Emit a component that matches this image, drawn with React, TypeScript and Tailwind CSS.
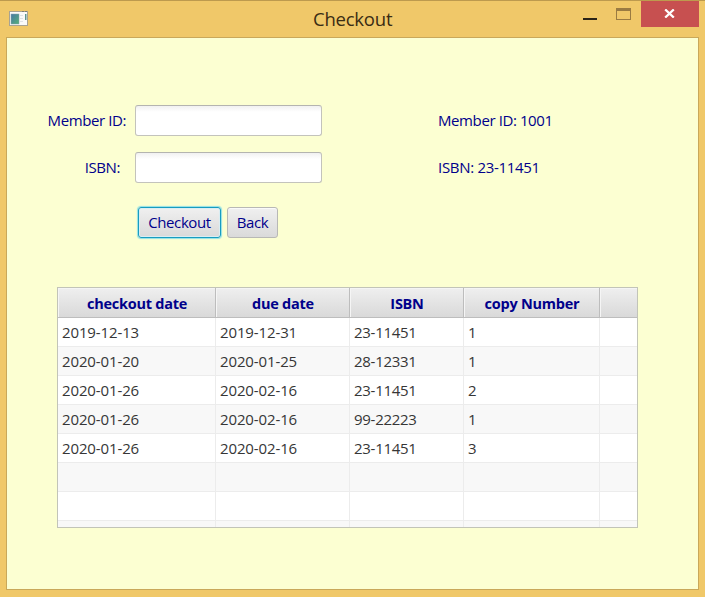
const columns = [
  { title: "checkout date", width: "w-[158px]", tracking: "tracking-[-0.12px]" },
  { title: "due date", width: "w-[134px]", tracking: "tracking-[-0.12px]" },
  { title: "ISBN", width: "w-[114px]", tracking: "tracking-[-0.28px]" },
  { title: "copy Number", width: "w-[136px]", tracking: "tracking-normal" },
];

const rows = [
  ["2019-12-13", "2019-12-31", "23-11451", "1"],
  ["2020-01-20", "2020-01-25", "28-12331", "1"],
  ["2020-01-26", "2020-02-16", "23-11451", "2"],
  ["2020-01-26", "2020-02-16", "99-22223", "1"],
  ["2020-01-26", "2020-02-16", "23-11451", "3"],
  ["", "", "", ""],
  ["", "", "", ""],
  ["", "", "", ""],
];

function AppIcon() {
  return (
    <svg className="ml-[9px] mt-[10px] h-[15px] w-[19px]" viewBox="0 0 19 15">
      <defs>
        <linearGradient id="pane" x1="0" y1="0" x2="1" y2="1">
          <stop offset="0" stopColor="#4778a6" />
          <stop offset="1" stopColor="#55b077" />
        </linearGradient>
      </defs>
      <rect x="0.5" y="0.5" width="18" height="14" fill="#fafafa" stroke="#a8a392" />
      <rect x="2" y="3" width="8" height="10" fill="url(#pane)" stroke="#8ba3ab" strokeWidth="0.5" />
      <path d="M11 4.5h3M11 7.5h3M11 10.5h3" stroke="#dfe2e6" />
      <rect x="16" y="3" width="1.5" height="6" fill="#5f9590" />
      <path d="M13 0.5h2M16 0.5h2" stroke="#7d7d78" />
    </svg>
  );
}

function TitleBar() {
  return (
    <header className="flex h-[36px] items-start">
      <AppIcon />
      <h1 className="ml-[285px] mt-[5px] w-[80px] whitespace-nowrap text-[18.5px] leading-[26px] tracking-[-0.22px] text-[#3a2c14]">
        Checkout
      </h1>
      <svg className="ml-[190px] mt-[16px] h-[3px] w-[14px] shrink-0" viewBox="0 0 14 3">
        <rect y="1" width="14" height="2" fill="#2b2418" />
      </svg>
      <svg className="ml-[19px] mt-[7px] h-[12px] w-[15px] shrink-0" viewBox="0 0 15 12">
        <rect x="0.5" y="0.5" width="14" height="11" fill="none" stroke="#9a7b42" />
        <rect width="15" height="3" fill="#9a7b42" />
      </svg>
      <button className="ml-[10px] flex h-[26px] w-[58px] shrink-0 items-center justify-center bg-[#c75050] pr-[2px]">
        <svg className="mt-[-1px] h-[9px] w-[11px]" viewBox="0 0 11 9">
          <path d="M1.2 0.4L9.8 8.6M9.8 0.4L1.2 8.6" stroke="#fff" strokeWidth="2.2" />
        </svg>
      </button>
    </header>
  );
}

function Field({ label, pad }: { label: string; pad: string }) {
  return (
    <div className="flex h-[31px] items-center">
      <label className={`w-[128px] whitespace-nowrap pb-[2px] text-right ${pad}`}>{label}</label>
      <input className="h-[31px] w-[187px] rounded-[3px] border border-[#c3c3bc] border-t-[#b4b4b0] bg-white bg-linear-to-b from-[#f1f1f1] to-white to-[6px] outline-none" />
    </div>
  );
}

export default function App() {
  return (
    <div
      className="h-[597px] w-[705px] overflow-hidden border-t border-[#bd9a4e] bg-[#f0c869] text-[15px] leading-5 text-[#00008b]"
      style={{ fontFamily: '"Open Sans", "Noto Sans", sans-serif' }}
    >
      <TitleBar />
      <main className="ml-[6px] h-[553px] w-[693px] border border-[#c9a85a] bg-[#fcffd2] tracking-[-0.4px]">
        <div className="flex pt-[67px]">
          <div className="flex w-[315px] flex-col gap-4">
            <Field label="Member ID:" pad="pr-[9px]" />
            <Field label="ISBN:" pad="pr-[15px]" />
          </div>
          <div className="ml-[116px] flex flex-col gap-4">
            <p className="flex h-[31px] items-center pb-[2px]">Member ID: 1001</p>
            <p className="flex h-[31px] items-center pb-[2px] tracking-[-0.3px]">ISBN: 23-11451</p>
          </div>
        </div>
        <div className="ml-[131px] mt-[24px] flex gap-[6px]">
          <button className="h-[31px] w-[83px] rounded-[3px] border border-[#179cc0] bg-linear-to-b from-[#f0f0f0] to-[#d9d9d9] pb-[2px] shadow-[0_0_1px_1px_#8fe0e6,inset_0_0_0_1px_#d9edf2]">
            Checkout
          </button>
          <button className="h-[31px] w-[51px] rounded-[3px] border border-[#b8b8b5] bg-linear-to-b from-[#f0f0f0] to-[#dadada] pb-[2px] shadow-[inset_0_1px_0_#fafafa]">
            Back
          </button>
        </div>
        <section className="ml-[50px] mt-[49px] h-[241px] w-[581px] overflow-hidden border border-[#c2c4b8] bg-white">
          <div className="flex h-[30px] border-b border-[#bdbdbd] bg-linear-to-b from-[#efefef] to-[#d9d9d9] text-[14.5px] font-bold tracking-[-0.25px]">
            {columns.map((column) => (
              <div
                key={column.title}
                className={`flex shrink-0 items-center justify-center border-r border-[#bdbdbd] pl-px pt-[2px] shadow-[inset_1px_1px_0_#f5f5f5] ${column.width}`}
              >
                {column.title}
              </div>
            ))}
            <div className="flex-1 shadow-[inset_1px_1px_0_#f5f5f5]" />
          </div>
          {rows.map((row, index) => (
            <div key={index} className="flex h-[29px] border-b border-[#ececec] text-[#363636] odd:bg-[#f8f8f8] even:bg-white">
              {row.map((value, cell) => (
                <div
                  key={cell}
                  className={`flex shrink-0 items-center border-r border-[#ececec] pb-px pl-[4px] ${columns[cell].width} ${columns[cell].tracking}`}
                >
                  {value}
                </div>
              ))}
            </div>
          ))}
        </section>
      </main>
    </div>
  );
}
